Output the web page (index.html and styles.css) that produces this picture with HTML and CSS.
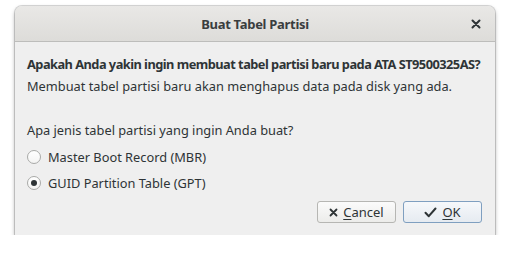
FILE: index.html
```html
<!DOCTYPE html>
<html lang="id">
<head>
<meta charset="utf-8">
<title>Buat Tabel Partisi</title>
<link rel="stylesheet" href="styles.css">
</head>
<body>
<div class="window">
  <div class="titlebar">
    <span class="title">Buat Tabel Partisi</span>
    <span class="close"><svg width="10" height="10" viewBox="0 0 10 10"><path d="M1.5 1.5 L8.5 8.5 M8.5 1.5 L1.5 8.5" stroke="#2e3436" stroke-width="2" stroke-linecap="round"/></svg></span>
  </div>
  <div class="content">
    <p class="primary">Apakah Anda yakin ingin membuat tabel partisi baru pada ATA ST9500325AS?</p>
    <p class="secondary">Membuat tabel partisi baru akan menghapus data pada disk yang ada.</p>
    <p class="question">Apa jenis tabel partisi yang ingin Anda buat?</p>
    <div class="option"><span class="radio"></span><span>Master Boot Record (MBR)</span></div>
    <div class="option"><span class="radio checked"></span><span>GUID Partition Table (GPT)</span></div>
  </div>
  <div class="actions">
    <button class="btn"><svg width="9" height="9" viewBox="0 0 9 9"><path d="M1.5 1.5 L7.5 7.5 M7.5 1.5 L1.5 7.5" stroke="#2e3436" stroke-width="1.8" stroke-linecap="round"/></svg><span><u>C</u>ancel</span></button>
    <button class="btn default"><svg width="13" height="11" viewBox="0 0 13 11"><path d="M1.5 5.8 L4.8 9.2 L11.5 1.5" fill="none" stroke="#2e3436" stroke-width="2" stroke-linecap="round" stroke-linejoin="round"/></svg><span><u>O</u>K</span></button>
  </div>
</div>
</body>
</html>
```
FILE: styles.css
```css
html, body {
  margin: 0;
  background: #ffffff;
}
body {
  padding: 6px 0 0 15px;
  font-family: "Noto Sans", "Open Sans", sans-serif;
  font-size: 12.8px;
  color: #2e3436;
}
.window {
  width: 480px;
  height: 229px;
  box-sizing: border-box;
  border-radius: 7px 7px 0 0;
  background: #efefef;
  box-shadow: 0 2px 4px rgba(0,0,0,0.35), 0 0 0 1px rgba(0,0,0,0.14);
  display: flex;
  flex-direction: column;
  overflow: hidden;
}
.titlebar {
  flex: none;
  height: 35px;
  border-bottom: 1px solid #bdbdbb;
  background: linear-gradient(#e9e8e6, #dddcd9);
  display: flex;
  align-items: center;
  justify-content: center;
  position: relative;
}
.title {
  font-weight: bold;
  font-size: 13px;
  letter-spacing: -0.3px;
  color: #3a3d3e;
}
.close {
  position: absolute;
  right: 14px;
  top: 13px;
  width: 10px;
  height: 10px;
  display: flex;
}
.content {
  flex: 1;
  padding: 13px 12px 0 12px;
}
p {
  margin: 0;
  line-height: 18px;
  white-space: nowrap;
}
.primary {
  font-weight: bold;
  letter-spacing: -0.52px;
}
.secondary {
  margin-top: 4px;
}
.question {
  margin-top: 26px;
}
.option {
  height: 26px;
  display: flex;
  align-items: center;
  gap: 7px;
}
.option:first-of-type {
  margin-top: 5px;
}
.radio {
  width: 12px;
  height: 12px;
  border-radius: 50%;
  border: 1px solid #a9aaa8;
  background: linear-gradient(#ffffff, #f4f4f3);
  flex: none;
  position: relative;
}
.radio.checked::after {
  content: "";
  position: absolute;
  left: 3px;
  top: 3px;
  width: 6px;
  height: 6px;
  border-radius: 50%;
  background: #2e3436;
}
.actions {
  flex: none;
  display: flex;
  justify-content: flex-end;
  gap: 7px;
  padding: 0 13px 12px 0;
}
.btn {
  width: 79px;
  height: 22px;
  box-sizing: border-box;
  border: 1px solid #b6b6b3;
  border-radius: 3px;
  background: linear-gradient(#fbfbfb, #ececea);
  font-family: inherit;
  font-size: 13px;
  color: #2e3436;
  display: flex;
  align-items: center;
  justify-content: center;
  gap: 5px;
  padding: 0;
}
.btn.default {
  border-color: #7f9fc0;
  background: linear-gradient(#f6f8fb, #e6ebf1);
}
u {
  text-decoration-thickness: 1px;
  text-underline-offset: 2px;
}
```
